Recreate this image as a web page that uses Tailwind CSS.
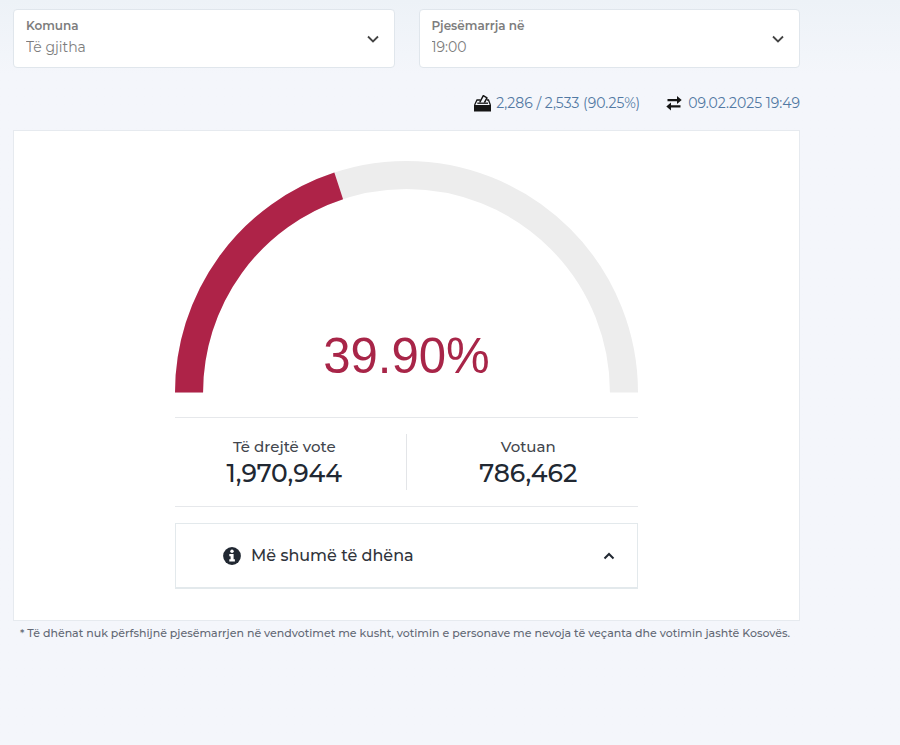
<!DOCTYPE html>
<html lang="sq">
<head>
<meta charset="utf-8">
<meta name="viewport" content="width=device-width, initial-scale=1">
<title>Pjesëmarrja në votime</title>
<script src="https://cdn.jsdelivr.net/npm/@tailwindcss/browser@4"></script>
</head>
<body class="min-h-screen bg-[#f4f6fb] bg-linear-to-b from-[#edf2f7] to-[#f4f6fb] to-10% font-[Montserrat,Inter,sans-serif] text-[#212832]">
<main class="pt-[9px] pl-[13px] pr-[100px]">
  <form class="grid grid-cols-2 gap-6">
    <div class="relative rounded-sm border border-[#e0e6ec] bg-white">
      <label for="komuna" class="pointer-events-none absolute top-2 left-3 text-xs leading-4 font-semibold text-[#7d7d7d]">Komuna</label>
      <select id="komuna" class="block w-full appearance-none bg-transparent px-3 pt-[27px] pb-[10px] text-sm leading-5 text-[#7d7d7d]">
        <option>Të gjitha</option>
      </select>
      <svg class="pointer-events-none absolute top-[22px] right-3.5 size-3.5" viewBox="0 0 14 14" fill="none" stroke="#444" stroke-width="1.8" aria-hidden="true"><path d="M2 4.500 7 9.500 12 4.500"/></svg>
    </div>
    <div class="relative rounded-sm border border-[#e0e6ec] bg-white">
      <label for="ora" class="pointer-events-none absolute top-2 left-3 text-xs leading-4 font-semibold text-[#7d7d7d]">Pjesëmarrja në</label>
      <select id="ora" class="block w-full appearance-none bg-transparent px-3 pt-[27px] pb-[10px] text-sm leading-5 text-[#7d7d7d]">
        <option>19:00</option>
      </select>
      <svg class="pointer-events-none absolute top-[22px] right-3.5 size-3.5" viewBox="0 0 14 14" fill="none" stroke="#444" stroke-width="1.8" aria-hidden="true"><path d="M2 4.500 7 9.500 12 4.500"/></svg>
    </div>
  </form>

  <div class="flex justify-end gap-[26px] pt-[25px] pb-[17px] text-sm leading-5 text-[#5279a3]">
    <div class="flex items-center gap-1">
      <svg class="h-[18px] w-[19px]" viewBox="0 0 19 18" fill="none" aria-hidden="true">
        <path d="M1 11h17v6.500H1z" fill="#151515"/>
        <path d="M1.600 11 4 6h3.500M17.400 11 15.500 6h-1.500" stroke="#151515" stroke-width="1.300"/>
        <path d="M4.300 9.200h10.700" stroke="#151515" stroke-width="1.300"/>
        <path d="M6.700 8.500 10.300 1.700 14 3.800l-2.600 4.900" stroke="#151515" stroke-width="1.500" stroke-linejoin="round"/>
      </svg>
      <span>2,286 / 2,533 (90.25%)</span>
    </div>
    <div class="flex items-center gap-1.5">
      <svg class="h-4 w-4" viewBox="0 0 16 16" aria-hidden="true"><path d="M1.500 4H11V1l4.700 4L11 9V6.200H1.500zM14.500 10.300H5V7.500L.3 11.500 5 15.500V12.500h9.500z" fill="#151515"/></svg>
      <span>09.02.2025 19:49</span>
    </div>
  </div>

  <section class="border border-[#e6eaef] bg-white px-[161px] pt-[30px] pb-[31px]">
    <svg class="block w-full" viewBox="0 0 462 231" role="img" aria-label="Pjesëmarrja 39.90%">
      <path d="M14 231A217 217 0 0 1 448 231" fill="none" stroke="#ededed" stroke-width="28"/>
      <path d="M14 231A217 217 0 0 1 448 231" fill="none" stroke="#ae2348" stroke-width="28" pathLength="100" stroke-dasharray="39.9 100"/>
      <text x="231" y="212" text-anchor="middle" font-size="49" class="fill-[#a82548] font-['Liberation_Sans',Arial,sans-serif]">39.90%</text>
    </svg>
    <dl class="mt-6 grid grid-cols-2 border-y border-[#e6e8eb] py-4 text-center">
      <div class="border-r border-[#e3e5e8] pt-[3px] pr-3">
        <dt class="text-[15px] leading-5 font-medium text-[#42464d]">Të drejtë vote</dt>
        <dd class="text-[25px] leading-[33px] font-medium">1,970,944</dd>
      </div>
      <div class="pt-[3px] pl-3">
        <dt class="text-[15px] leading-5 font-medium text-[#42464d]">Votuan</dt>
        <dd class="text-[25px] leading-[33px] font-medium">786,462</dd>
      </div>
    </dl>
    <button type="button" class="mt-4 flex w-full items-center border border-b-2 border-[#e3e9ec] pt-[21px] pb-5 pr-[22px] pl-[47px] text-base leading-[22px] font-medium text-[#30343b]">
      <svg class="mr-2.5 size-[18px]" viewBox="0 0 18 18" aria-hidden="true"><circle cx="9" cy="9" r="8.900" fill="#212832"/><circle cx="9" cy="4.300" r="1.700" fill="#fff"/><path d="M6.300 7h4.300v5.300h1.300v2.200H6.300v-2.200h1.300V9.200H6.300z" fill="#fff"/></svg>
      <span>Më shumë të dhëna</span>
      <svg class="ml-auto size-3" viewBox="0 0 12 12" fill="none" stroke="#212832" stroke-width="2" aria-hidden="true"><path d="M1.500 8.500 6 4l4.500 4.500"/></svg>
    </button>
  </section>
  <p class="px-[7px] pt-1 text-[11px] leading-4 font-medium text-[#636975]">* Të dhënat nuk përfshijnë pjesëmarrjen në vendvotimet me kusht, votimin e personave me nevoja të veçanta dhe votimin jashtë Kosovës.</p>
</main>
</body>
</html>
